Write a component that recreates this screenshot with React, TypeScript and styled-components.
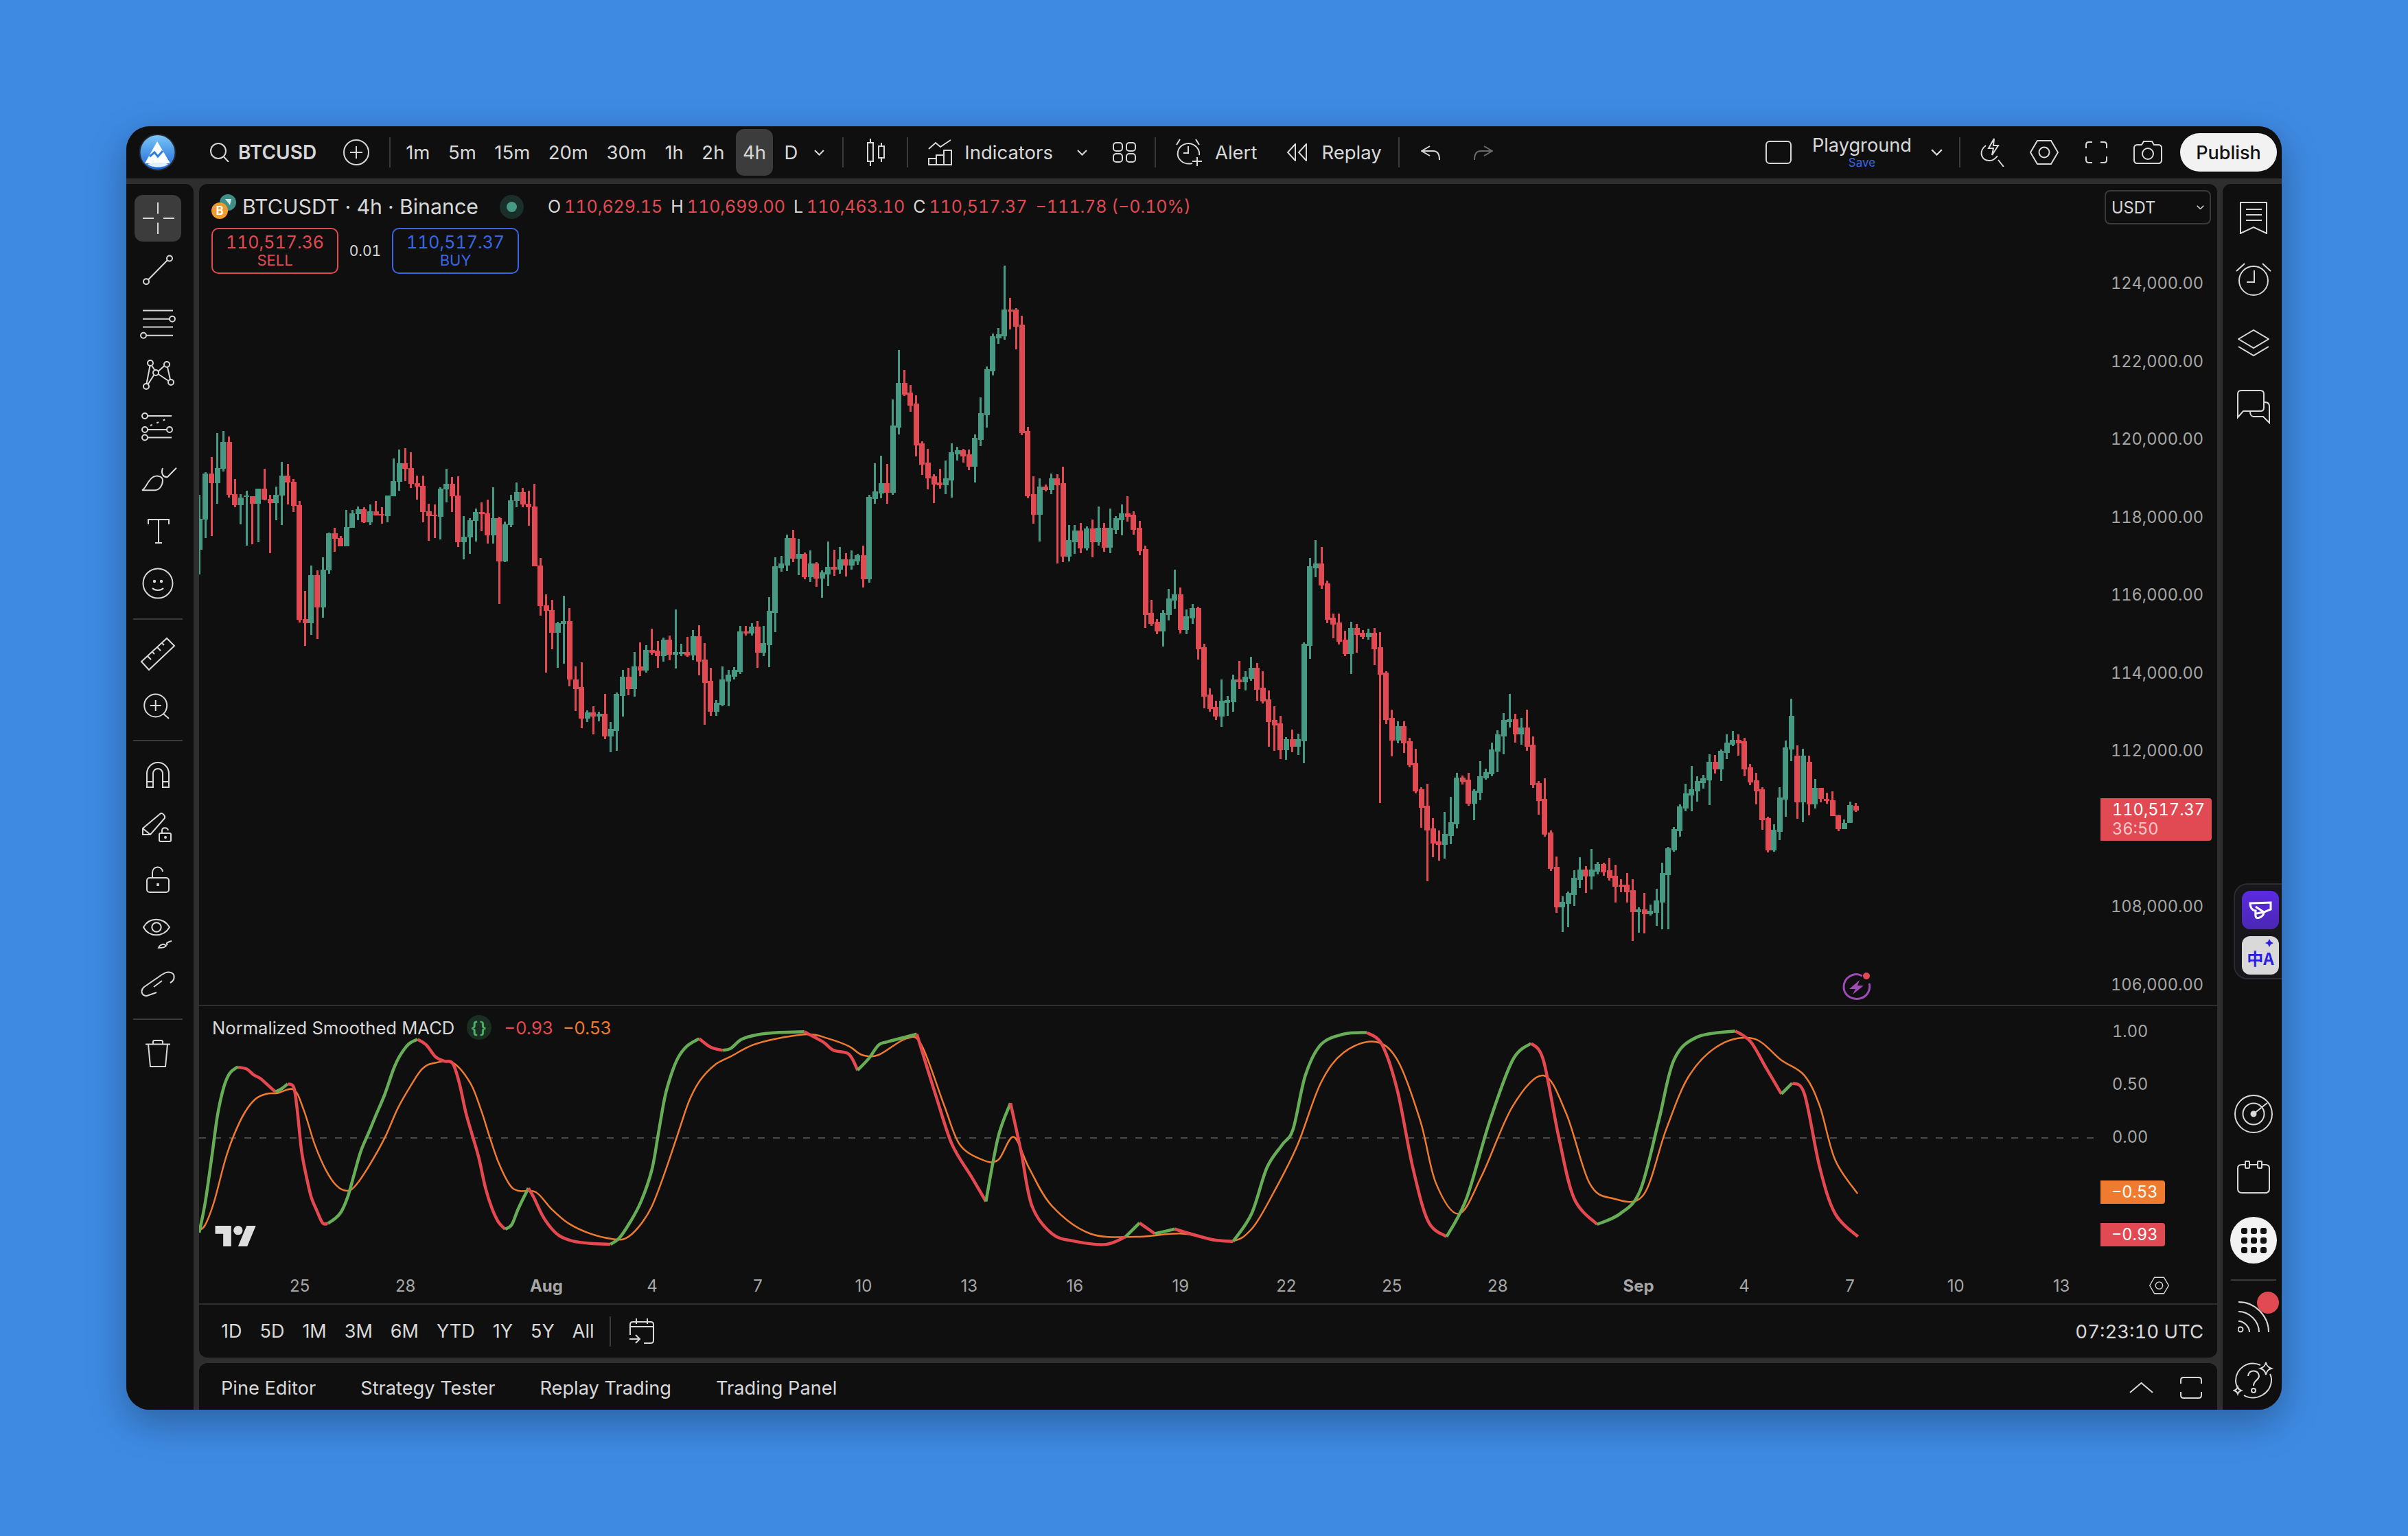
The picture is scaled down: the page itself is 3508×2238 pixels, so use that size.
import React from 'react'
import styled, { createGlobalStyle } from 'styled-components'

const GREEN = '#469a84'
const RED = '#e24a53'
const ORANGE = '#ee7b30'
const TEXT = '#d8d8d8'
const MUTED = '#a6a6a6'
const PANEL = '#0f0f0f'
const LINE = '#2e2e2e'

const GlobalStyle = createGlobalStyle`
  html, body {
    margin: 0;
    padding: 0;
    background: #3e8ae3;
  }
  body {
    font-family: Inter, "Noto Sans", sans-serif;
  }
`

// candle data, traced from the picture: [top, bottom, wickTop, wickBottom, up]
type Traced = [number, number, number, number, number]
const head: Traced[] = [
  [768, 903, 663, 1010, 1], [570, 770, 564, 852, 1], [570, 612, 498, 843, 0], [546, 612, 393, 702, 1],
  [432, 549, 384, 561, 1], [432, 663, 408, 675, 0], [660, 708, 594, 717, 0], [675, 708, 660, 792, 1],
  [666, 672, 645, 885, 1], [669, 702, 669, 879, 0], [636, 702, 636, 870, 1], [636, 684, 549, 687, 0],
  [681, 699, 663, 918, 0], [663, 699, 627, 774, 1], [579, 666, 519, 795, 1], [579, 609, 528, 705, 0],
  [606, 711, 594, 738, 0], [708, 1209, 690, 1221, 0], [1206, 1224, 1083, 1323, 0], [1014, 1224, 972, 1275, 1],
  [1014, 1155, 993, 1293, 0], [990, 1155, 936, 1200, 1], [831, 993, 828, 1008, 1], [831, 855, 807, 912, 0],
  [852, 888, 843, 888, 0], [804, 888, 729, 888, 1], [744, 807, 729, 807, 1], [726, 747, 714, 774, 1],
  [726, 783, 717, 786, 0], [735, 783, 705, 795, 1], [735, 753, 690, 753, 0], [747, 753, 717, 789, 0],
  [666, 756, 666, 783, 1], [603, 669, 504, 669, 1], [525, 606, 465, 645, 1], [525, 549, 459, 603, 0],
  [546, 615, 477, 633, 0], [612, 627, 579, 684, 0], [624, 738, 579, 783, 0], [735, 756, 702, 864, 0],
  [750, 756, 705, 852, 0], [636, 759, 630, 858, 1], [615, 639, 549, 696, 1], [615, 669, 585, 738, 0],
  [666, 870, 582, 891, 0], [846, 870, 756, 945, 1], [774, 849, 765, 921, 1], [738, 777, 723, 867, 1],
  [738, 747, 696, 822, 0], [744, 840, 684, 876, 0], [765, 840, 630, 876, 1], [765, 954, 759, 1140, 0],
  [792, 954, 780, 957, 1], [687, 795, 663, 804, 1], [651, 690, 609, 717, 1], [651, 705, 633, 717, 0],
  [702, 717, 645, 798, 0], [714, 975, 615, 975, 0], [972, 1149, 939, 1191, 0], [1146, 1170, 1098, 1440, 0],
  [1167, 1266, 1122, 1338, 0], [1224, 1266, 1218, 1420, 1], [1215, 1227, 1104, 1400, 1], [1215, 1470, 1158, 1500, 0],
]
const tail: Traced[] = [
  [-40, 102, -70, 150, 0], [-40, 102, -60, 160, 1], [-20, 108, -40, 140, 0], [58, 108, 30, 120, 1],
  [58, 90, 58, 102, 0], [90, 96, 72, 105, 0], [94, 142, 68, 142, 0], [140, 182, 138, 188, 0],
  [164, 182, 152, 182, 1], [110, 164, 100, 164, 1], [111, 125, 103, 130, 0],
]

// close path for the middle of the series, in reference coordinates / 2.2372
const closePath: [number, number][] = [
  [371, 440], [375, 455], [380, 462], [385, 460], [390, 470], [397, 482], [402, 450], [410, 440], [415, 432],
  [422, 428], [430, 425], [437, 418], [445, 425], [452, 420], [458, 440], [461, 465], [468, 452], [475, 440],
  [480, 425], [484, 405], [490, 415], [497, 425], [503, 375], [512, 352], [525, 370], [545, 372], [556, 362],
  [563, 375], [566, 330], [578, 315], [586, 240], [594, 265], [600, 305], [612, 318], [622, 290], [632, 298],
  [638, 270], [647, 220], [654, 200], [662, 205], [667, 310], [672, 345], [678, 315], [688, 310], [692, 365],
  [700, 350], [720, 350], [733, 330], [740, 345], [746, 400], [755, 412], [762, 382], [770, 410], [778, 400],
  [783, 450], [790, 470], [805, 440], [815, 430], [825, 465], [835, 485], [848, 480], [850, 375], [858, 365],
  [865, 400], [875, 420], [885, 405], [897, 430], [903, 475], [912, 480], [920, 510], [930, 540], [943, 550],
  [948, 510], [960, 520], [970, 490], [982, 460], [995, 490], [1003, 530], [1012, 585], [1025, 575],
  [1045, 565], [1060, 580], [1070, 600], [1085, 565], [1092, 530], [1105, 515], [1125, 485], [1135, 490],
  [1145, 525], [1152, 552], [1160, 520], [1165, 468],
]
const wickHighs: [number, number][] = [
  [654, 173], [586, 228], [855, 352], [982, 452], [1165, 455], [1127, 476], [440, 397], [512, 348], [733, 323],
]
const wickLows: [number, number][] = [
  [397, 490], [929, 574], [1017, 607], [1070, 608], [1085, 605], [898, 523], [1150, 555], [850, 497], [458, 472], [690, 367],
]

const SCALE = 2.2372
const STEP = 8.557
const barX = (i: number) => 290.9 + STEP * i

const pathY = (x: number) => {
  for (let k = 1; k < closePath.length; k++) {
    const [x0, y0] = closePath[k - 1]
    const [x1, y1] = closePath[k]
    if (x <= x1) return y0 + ((y1 - y0) * (x - x0)) / (x1 - x0)
  }
  return closePath[closePath.length - 1][1]
}

const buildCandles = () => {
  let seed = 41
  const rand = () => {
    seed = (seed * 16807) % 2147483647
    return seed / 2147483647
  }
  const bars: { x: number; top: number; bot: number; wt: number; wb: number; up: boolean }[] = []
  head.forEach((c, i) =>
    bars.push({ x: barX(i), top: 500 + c[0] / 3, bot: 500 + c[1] / 3, wt: 500 + c[2] / 3, wb: 500 + c[3] / 3, up: !!c[4] }),
  )
  let prev = bars[bars.length - 1].bot
  for (let i = 64; i < 272; i++) {
    const x = barX(i)
    const close = pathY(x / SCALE) * SCALE + (rand() - 0.5) * 30
    const top = Math.min(prev, close)
    const bot = Math.max(prev, close) + 3
    const bar = {
      x,
      top,
      bot,
      wt: top - rand() * rand() * 44 - 2,
      wb: bot + rand() * rand() * 44 + 2,
      up: close < prev,
    }
    wickHighs.forEach(([hx, hy]) => {
      if (Math.abs(hx * SCALE - x) < 4.3) bar.wt = hy * SCALE
    })
    wickLows.forEach(([lx, ly]) => {
      if (Math.abs(lx * SCALE - x) < 4.3) bar.wb = ly * SCALE
    })
    bars.push(bar)
    prev = close
  }
  tail.forEach((c, k) =>
    bars.push({
      x: barX(272 + k),
      top: 1120 + c[0] / 2.063,
      bot: 1120 + c[1] / 2.063,
      wt: 1120 + c[2] / 2.063,
      wb: 1120 + c[3] / 2.063,
      up: !!c[4],
    }),
  )
  return bars
}
const candles = buildCandles()

// MACD lines. First part read from a zoom, rest in reference coordinates.
type Pt = [number, number]
const zm = (pts: Pt[]): Pt[] => pts.map(([x, y]) => [280 + x / 1.568, 1450 + y / 3])
const dp = (pts: Pt[]): Pt[] => pts.map(([x, y]) => [x * SCALE, y * SCALE])

const fastLine: { color: string; pts: Pt[] }[] = [
  { color: 'g', pts: zm([[16, 1035], [30, 900], [45, 700], [58, 520], [72, 400], [85, 340], [100, 315], [105, 312]]) },
  { color: 'r', pts: zm([[105, 312], [125, 320], [140, 345], [155, 360], [170, 385], [190, 420]]) },
  { color: 'g', pts: zm([[190, 420], [205, 405], [218, 385]]) },
  { color: 'r', pts: zm([[218, 385], [232, 400], [240, 500], [250, 680], [262, 800], [272, 880], [285, 940], [298, 993], [310, 995]]) },
  { color: 'g', pts: zm([[310, 995], [325, 975], [340, 945], [355, 880], [370, 780], [385, 680], [405, 590], [420, 520], [440, 430], [460, 320], [475, 260], [495, 210], [515, 190]]) },
  { color: 'r', pts: zm([[515, 190], [535, 215], [555, 265], [575, 285], [595, 295], [610, 380], [625, 510], [640, 610], [655, 710], [670, 840], [685, 930], [700, 990], [715, 1020]]) },
  { color: 'g', pts: zm([[715, 1020], [730, 1000], [745, 930], [768, 840]]) },
  { color: 'r', pts: zm([[768, 840], [780, 880], [800, 960], [820, 1015], [840, 1050], [870, 1072], [910, 1082], [955, 1086]]) },
  { color: 'g', pts: zm([[955, 1086], [975, 1060], [1000, 990], [1025, 900], [1050, 760], [1065, 600], [1080, 440], [1095, 340], [1110, 270], [1130, 220], [1158, 187]]) },
  { color: 'r', pts: zm([[1158, 187], [1185, 225], [1212, 238]]) },
  { color: 'g', pts: zm([[1212, 238], [1230, 230], [1255, 190], [1290, 170], [1340, 160], [1398, 157]]) },
  { color: 'r', pts: zm([[1398, 157], [1440, 200], [1465, 238], [1500, 255], [1520, 325]]) },
  { color: 'g', pts: [...zm([[1520, 325], [1545, 275], [1568, 215]]), ...dp([[578, 678], [597, 673]])] },
  { color: 'r', pts: dp([[597, 673], [610, 715], [620, 745], [632, 765], [642, 782]]) },
  { color: 'g', pts: dp([[642, 782], [650, 740], [658, 718]]) },
  { color: 'r', pts: dp([[658, 718], [665, 750], [672, 785], [685, 803], [700, 808], [720, 810], [733, 805]]) },
  { color: 'g', pts: dp([[733, 805], [742, 796]]) },
  { color: 'r', pts: dp([[742, 796], [752, 803]]) },
  { color: 'g', pts: dp([[752, 803], [765, 800]]) },
  { color: 'r', pts: dp([[765, 800], [775, 803], [790, 807], [803, 808]]) },
  { color: 'g', pts: dp([[803, 808], [815, 790], [825, 760], [835, 745], [842, 735], [850, 700], [860, 680], [875, 673], [890, 672]]) },
  { color: 'r', pts: dp([[890, 672], [900, 680], [910, 710], [920, 760], [930, 795], [942, 805]]) },
  { color: 'g', pts: dp([[942, 805], [955, 780], [970, 730], [985, 690], [997, 679]]) },
  { color: 'r', pts: dp([[997, 679], [1005, 690], [1015, 740], [1025, 780], [1040, 797]]) },
  { color: 'g', pts: dp([[1040, 797], [1055, 790], [1068, 775], [1080, 730], [1090, 690], [1105, 675], [1130, 671]]) },
  { color: 'r', pts: dp([[1130, 671], [1140, 678], [1150, 695], [1160, 712]]) },
  { color: 'g', pts: dp([[1160, 712], [1167, 705]]) },
  { color: 'r', pts: dp([[1167, 705], [1175, 712], [1185, 760], [1195, 790], [1209.8, 805]]) },
]

const slowLine: Pt[] = [
  ...zm([[16, 1025], [30, 1000], [50, 900], [75, 720], [95, 610], [120, 510], [145, 450], [170, 428], [195, 425], [232, 410], [255, 500], [280, 650], [305, 760], [330, 830], [355, 852], [375, 825], [405, 740], [440, 620], [470, 490], [500, 390], [525, 320], [550, 295], [595, 292], [635, 380], [660, 500], [680, 620], [700, 730], [725, 825], [745, 852], [785, 858], [820, 930], [860, 995], [910, 1040], [960, 1063], [990, 1060], [1020, 1010], [1050, 920], [1080, 770], [1110, 600], [1135, 460], [1160, 370], [1195, 300], [1230, 265], [1280, 215], [1340, 185], [1410, 168], [1450, 185], [1500, 220], [1530, 258], [1568, 258]]),
  ...dp([[590, 676], [600, 680], [615, 720], [625, 745], [640, 755], [650, 755], [660, 740], [670, 760], [685, 785], [710, 803], [740, 805], [770, 803], [800, 808], [815, 800], [830, 775], [845, 745], [860, 705], [875, 685], [895, 678], [910, 690], [925, 730], [935, 770], [950, 790], [965, 765], [985, 720], [1005, 700], [1020, 725], [1035, 770], [1050, 780], [1070, 778], [1085, 735], [1100, 700], [1120, 680], [1142, 676], [1160, 690], [1175, 700], [1185, 720], [1195, 755], [1209.6, 777]]),
]

// catmull-rom through the traced points so the lines don't look polygonal
const toCurve = (pts: Pt[]) => {
  let d = `M${pts[0][0]} ${pts[0][1]}`
  for (let i = 0; i < pts.length - 1; i++) {
    const p0 = pts[i - 1] ?? pts[i]
    const p1 = pts[i]
    const p2 = pts[i + 1]
    const p3 = pts[i + 2] ?? p2
    d += `C${p1[0] + (p2[0] - p0[0]) / 6} ${p1[1] + (p2[1] - p0[1]) / 6} ${p2[0] - (p3[0] - p1[0]) / 6} ${p2[1] - (p3[1] - p1[1]) / 6} ${p2[0]} ${p2[1]}`
  }
  return d
}

const Page = styled.div`
  box-sizing: border-box;
  width: 3508px;
  height: 2238px;
  padding: 184px;
  background: #3e8ae3;
`

const Window = styled.div`
  display: flex;
  flex-direction: column;
  gap: 8px;
  height: 100%;
  border-radius: 34px;
  overflow: hidden;
  background: ${LINE};
  color: ${TEXT};
  box-shadow: 0 18px 55px rgba(0, 0, 0, 0.3);
`

const TopBar = styled.header`
  display: flex;
  flex: none;
  align-items: center;
  height: 76px;
  padding: 0 7px 0 18px;
  background: ${PANEL};
  font-size: 27.5px;
  white-space: nowrap;
`

const Spacer = styled.div`
  margin-left: auto;
`

const Glyph = styled.svg<{ $ml?: number; $mr?: number; $dim?: boolean }>`
  display: block;
  flex: none;
  fill: none;
  stroke: ${p => (p.$dim ? '#6a6a6a' : 'currentColor')};
  stroke-width: 2;
  margin-left: ${p => p.$ml ?? 0}px;
  margin-right: ${p => p.$mr ?? 0}px;
`

const Label = styled.span<{ $ml?: number }>`
  margin-left: ${p => p.$ml ?? 0}px;
`

const Symbol = styled.b`
  margin-left: 13px;
  font-size: 28px;
  font-weight: 600;
`

const Rule = styled.i<{ $ml: number }>`
  display: block;
  flex: none;
  width: 2px;
  height: 44px;
  margin-left: ${p => p.$ml}px;
  background: #3a3a3a;
`

const Intervals = styled.div`
  display: flex;
  align-items: center;
  gap: 6.5px;
  margin-left: 12px;
`

const Interval = styled.span<{ $active?: boolean }>`
  display: flex;
  align-items: center;
  height: 68px;
  padding: 0 10px;
  border-radius: 12px;
  background: ${p => (p.$active ? '#3c3c3c' : 'transparent')};
`

const SaveStack = styled.div`
  display: flex;
  flex-direction: column;
  align-items: center;
  margin-left: 30px;
  font-size: 27.2px;
  line-height: 1;
`

const SaveHint = styled.span`
  margin-top: 3px;
  font-size: 17px;
  color: #3a66e6;
`

const PublishButton = styled.button`
  width: 141px;
  height: 56px;
  margin-left: 26px;
  padding: 0;
  border: 0;
  border-radius: 28px;
  background: #f2f2f2;
  color: #111;
  font: 500 27px Inter, sans-serif;
`

const Body = styled.div`
  display: flex;
  flex: 1;
  gap: 8px;
  min-height: 0;
`

const LeftRail = styled.nav`
  display: flex;
  flex: none;
  flex-direction: column;
  gap: 8px;
  box-sizing: border-box;
  width: 98px;
  padding: 16px 0 0 12px;
  border-radius: 0 12px 0 0;
  background: ${PANEL};
`

const RailButton = styled.div<{ $active?: boolean }>`
  display: flex;
  align-items: center;
  justify-content: center;
  width: 68px;
  height: 68px;
  flex: none;
  border-radius: 12px;
  background: ${p => (p.$active ? '#3c3c3c' : 'transparent')};
`

const RailRule = styled.hr`
  flex: none;
  width: 72px;
  height: 2px;
  margin: 8.5px 0 7px -2px;
  border: 0;
  background: #3a3a3a;
`

const Center = styled.main`
  display: flex;
  flex: 1;
  flex-direction: column;
  gap: 8px;
  min-width: 0;
`

const ChartPanel = styled.section`
  display: flex;
  flex: 1;
  flex-direction: column;
  border-radius: 12px;
  overflow: hidden;
  background: ${PANEL};
`

const MainPane = styled.div`
  display: flex;
  flex: none;
  height: 1196px;
`

const MacdPane = styled.div`
  display: flex;
  flex: none;
  height: 384px;
  border-top: 2px solid ${LINE};
`

const Plot = styled.div`
  position: relative;
  flex: none;
  width: 2770px;
  height: 100%;
`

const PlotSvg = styled.svg`
  display: block;
  width: 100%;
  height: 100%;
`

const Legend = styled.div`
  position: absolute;
  top: 13px;
  left: 18px;
  display: flex;
  flex-direction: column;
  gap: 11px;
`

const LegendRow = styled.div`
  display: flex;
  align-items: center;
  height: 40px;
  font-size: 25px;
  font-variant-numeric: tabular-nums;
  white-space: nowrap;
`

const Title = styled.span`
  margin-left: 8px;
  font-size: 30.3px;
`

const StatusDot = styled.span`
  display: flex;
  align-items: center;
  justify-content: center;
  width: 35px;
  height: 35px;
  margin: 0 35px 0 31px;
  border-radius: 50%;
  background: #1a2e2a;

  &::after {
    content: '';
    width: 15px;
    height: 15px;
    border-radius: 50%;
    background: ${GREEN};
  }
`

const Ohlc = styled.span`
  margin-right: 12px;
  color: ${RED};

  & > b {
    margin-right: 5px;
    font-weight: 400;
    color: ${TEXT};
  }
`

const TradeRow = styled.div`
  display: flex;
  align-items: center;
  font-variant-numeric: tabular-nums;
`

const TradeButton = styled.div<{ $color: string }>`
  display: flex;
  flex-direction: column;
  align-items: center;
  justify-content: center;
  box-sizing: border-box;
  width: 185px;
  height: 67px;
  border: 2px solid ${p => p.$color};
  border-radius: 10px;
  color: ${p => p.$color};
  font-size: 25px;
  line-height: 27px;

  & > small {
    font-size: 22px;
    line-height: 24px;
  }
`

const Spread = styled.span`
  width: 78px;
  text-align: center;
  font-size: 21px;
`

const BoltBadge = styled.svg`
  position: absolute;
  left: 2394px;
  top: 1148px;
`

const PriceAxis = styled.div`
  position: relative;
  flex: 1;
  padding-top: 88px;
  color: ${MUTED};
  font-size: 23.6px;
  font-variant-numeric: tabular-nums;
`

const PriceTick = styled.div<{ $step: number }>`
  display: flex;
  align-items: center;
  justify-content: flex-end;
  height: ${p => p.$step}px;
  padding-right: 20px;
`

const CurrencySelect = styled.div`
  position: absolute;
  top: 9px;
  left: 6px;
  display: flex;
  align-items: center;
  justify-content: space-between;
  box-sizing: border-box;
  width: 155px;
  height: 50px;
  padding: 0 8px;
  border: 2px solid #3a3a3a;
  border-radius: 8px;
  color: ${TEXT};
`

const PriceFlag = styled.div<{ $top: number; $bg: string; $tall?: boolean }>`
  position: absolute;
  top: ${p => p.$top}px;
  left: 0;
  box-sizing: border-box;
  width: ${p => (p.$tall ? 162 : 94)}px;
  height: ${p => (p.$tall ? 62 : 34)}px;
  padding-left: ${p => (p.$tall ? 17 : 16)}px;
  border-radius: 0 4px 4px 0;
  background: ${p => p.$bg};
  color: #fff;
  line-height: ${p => (p.$tall ? 28 : 34)}px;
  padding-top: ${p => (p.$tall ? 3 : 0)}px;

  & > span {
    display: block;
    color: rgba(255, 255, 255, 0.7);
  }
`

const MacdAxis = styled(PriceAxis)`
  padding-top: 0;
  margin-top: -2px;
`

const MacdTick = styled(PriceTick)`
  padding-right: 0;
  justify-content: flex-start;
  padding-left: 17px;
`

const MacdLegend = styled.div`
  position: absolute;
  top: 13px;
  left: 19px;
  display: flex;
  align-items: center;
  font-size: 25.6px;
  white-space: nowrap;
`

const Braces = styled.span`
  display: flex;
  align-items: center;
  justify-content: center;
  width: 36px;
  height: 36px;
  margin: 0 18px;
  border-radius: 50%;
  background: #1a2e22;
  color: #4fae68;
  font-size: 24px;
  font-weight: 600;
  letter-spacing: 2px;
`

const MacdValue = styled.span<{ $color: string }>`
  margin-right: 14px;
  color: ${p => p.$color};
`

const TvLogo = styled.svg`
  position: absolute;
  left: 23px;
  top: 320px;
  fill: #dedede;
`

const TimeAxis = styled.div`
  display: flex;
  flex: none;
  align-items: center;
  box-sizing: border-box;
  height: 51px;
  padding-bottom: 3px;
  border-bottom: 2px solid ${LINE};
`

const TimeGrid = styled.div`
  display: grid;
  grid-template-columns: repeat(51, 51.34px);
  box-sizing: border-box;
  width: 2841px;
  padding-left: 121px;
  color: ${MUTED};
  font-size: 24px;
`

const TimeTick = styled.span<{ $day: number; $strong?: boolean }>`
  grid-column: ${p => p.$day + 1};
  grid-row: 1;
  justify-self: center;
  font-weight: ${p => (p.$strong ? 700 : 400)};
`

const RangeBar = styled.div`
  display: flex;
  flex: 1;
  align-items: center;
  gap: 26px;
  padding: 0 20px 0 32px;
  font-size: 27px;
`

const RangeClock = styled.span`
  margin-left: auto;
  font-size: 27.5px;
  font-variant-numeric: tabular-nums;
`

const BottomPanel = styled.footer`
  display: flex;
  flex: none;
  align-items: center;
  gap: 65px;
  box-sizing: border-box;
  height: 68px;
  padding: 4px 22px 0 32px;
  border-radius: 12px 12px 0 0;
  background: ${PANEL};
  font-size: 27.2px;
`

const RightRail = styled.aside`
  display: flex;
  flex: none;
  flex-direction: column;
  align-items: center;
  box-sizing: border-box;
  width: 86px;
  padding: 3px 0 0 4px;
  border-radius: 12px 0 0 0;
  background: ${PANEL};
`

const RightSlot = styled.div`
  display: flex;
  flex: none;
  align-items: center;
  justify-content: center;
  height: 92px;
`

const Widget = styled.div`
  display: flex;
  flex: none;
  flex-direction: column;
  gap: 10px;
  align-self: flex-end;
  box-sizing: border-box;
  width: 70px;
  height: 140px;
  margin: 648px 0 150px 0;
  padding: 9px 4px 9px 10px;
  border: 2px solid #2a2a30;
  border-right: 0;
  border-radius: 20px 0 0 20px;
  background: #17171b;
`

const WidgetButton = styled.div<{ $light?: boolean }>`
  position: relative;
  display: flex;
  flex: none;
  justify-content: center;
  height: 56px;
  padding-bottom: ${p => (p.$light ? 12 : 0)}px;
  box-sizing: border-box;
  align-items: ${p => (p.$light ? 'flex-end' : 'center')};
  border-radius: 12px;
  background: ${p => (p.$light ? '#d9d9d9' : 'linear-gradient(#5b2be0, #4a27b5)')};
  color: #2c1fe0;
  font: 700 24px "Noto Sans CJK SC", "Liberation Sans", sans-serif;
  line-height: 1;
`

const Sparkle = styled.svg`
  position: absolute;
  top: 4px;
  right: 8px;
  fill: #2c1fe0;
`

const DotsButton = styled.div`
  display: grid;
  grid-template-columns: repeat(3, 9px);
  gap: 5px;
  justify-content: center;
  align-content: center;
  width: 68px;
  height: 68px;
  border-radius: 50%;
  background: #f2f2f2;

  & > i {
    width: 9px;
    height: 9px;
    border-radius: 3px;
    background: #111;
  }
`

const RightRule = styled.hr`
  flex: none;
  width: 66px;
  height: 2px;
  margin: 11px 0 7px;
  border: 0;
  background: #3a3a3a;
`

const FeedIcon = styled.div`
  position: relative;
  display: flex;
`

const RedDot = styled.i`
  position: absolute;
  top: -14px;
  right: -14px;
  width: 32px;
  height: 32px;
  border-radius: 50%;
  background: ${RED};
`

const Chevron: React.FC<{ ml?: number; size?: number }> = ({ ml, size = 15 }) => (
  <Glyph $ml={ml} width={size} height={size * 0.6} viewBox="0 0 15 9">
    <path d="M1 1l6.500 6.500L14 1" />
  </Glyph>
)

const Hexagon: React.FC<{ w: number; h: number; ml?: number; mr?: number }> = ({ w, h, ml, mr }) => (
  <Glyph $ml={ml} $mr={mr} width={w} height={h} viewBox="0 0 42 36">
    <path d="M1 18L11 1h20l10 17-10 17H11z" />
    <circle cx="21" cy="18" r="7.500" />
  </Glyph>
)

const RailIcon: React.FC<{ children: React.ReactNode }> = ({ children }) => (
  <Glyph width={56} height={56} viewBox="0 0 56 56">
    {children}
  </Glyph>
)

const leftTools: React.ReactNode[] = [
  <path d="M28 5V21.500M28 34.500V51M6 28H22M36 28H52" />,
  <>
    <circle cx="45" cy="10.500" r="4" />
    <circle cx="11" cy="44.300" r="4" />
    <path d="M42 13L14 41.500" />
  </>,
  <>
    <path d="M6 10.500H50M6 22.700H45M6 34.500H50M11 46.800H50" />
    <circle cx="49" cy="22.700" r="4" />
    <circle cx="7" cy="46.800" r="4" />
  </>,
  <>
    <circle cx="17" cy="11" r="4" />
    <circle cx="41" cy="13" r="4" />
    <circle cx="25" cy="25" r="4" />
    <circle cx="11" cy="45" r="4" />
    <circle cx="47" cy="39" r="4" />
    <path d="M16.500 15L11.500 41M19 14.500L23.500 21.500M22.500 28L13.500 42M28.500 23L37.500 15M42 17L46 35M28.500 27L43.500 37" />
  </>,
  <>
    <circle cx="9" cy="12" r="4" />
    <path d="M13 12H48" />
    <path d="M17 26L44 15" strokeDasharray="3 7" />
    <circle cx="9" cy="32" r="4" />
    <circle cx="45" cy="32" r="4" />
    <path d="M13 32H41" />
    <circle cx="9" cy="43.500" r="4" />
    <path d="M13 43.500H48" />
  </>,
  <>
    <path d="M5 44.300C11 41 13 30 21 25C27 22 35 24 35 30C35 37 30 44.300 24 44.300Z" />
    <path d="M55 11.700L42 25C36 26 32 20 35 12" />
  </>,
  <path d="M14 18V11H44V18M29 11V45M24 45H34" />,
  <>
    <circle cx="28" cy="28" r="21.500" />
    <path d="M20 35C24 39 32 39 36 35" />
    <circle cx="23" cy="25" r="1.200" />
    <circle cx="33" cy="25" r="1.200" />
  </>,
]
const measureTools: React.ReactNode[] = [
  <>
    <path d="M4 40L41 6L52 17L15 52Z" />
    <path d="M13 32L18 37M20 26L23 29M27 19L32 24M34 13L37 16" />
  </>,
  <>
    <circle cx="24.700" cy="28" r="16.500" />
    <path d="M16.700 28H32.700M24.700 20V36M36 40L44 47" />
  </>,
]
const magnetTools: React.ReactNode[] = [
  <path d="M12 46V26a16 16 0 0 1 32 0V46H35V26a7 7 0 0 0-14 0V46ZM12 38H21M35 38H44" />,
  <>
    <path d="M6 39V30L31 9C34 6 39 11 38 15L17 39Z" />
    <path d="M6 30L17 39" />
    <rect x="30" y="37" width="17" height="12" rx="2" />
    <path d="M34 37V33C34 28 42 28 43 33" />
    <circle cx="39" cy="43" r="1" />
  </>,
  <>
    <rect x="12" y="26" width="32" height="21" rx="4" />
    <path d="M20 26V19C20 8 34 8 35 17" />
    <path d="M28 34V38" strokeWidth="3.500" />
  </>,
  <>
    <path d="M7 22C15 7 36 7 45 22C36 37 15 37 7 22Z" />
    <circle cx="26" cy="22" r="6.700" />
    <path d="M29 52C31 47 37 45 40 49C39 52 33 52 29 52ZM42 48C39 45 42 44 48 42" />
  </>,
  <path d="M22 33L34 24M26 41L12 46C4 46 2 38 8 33L34 15C44 8 54 12 51 22C50 24 48 26 46 27" />,
]

const Logo = () => (
  <Glyph width={55} height={54} viewBox="0 0 55 54" style={{ stroke: 'none' }}>
    <defs>
      <linearGradient id="logoFill" x1="0" y1="0" x2="0" y2="1">
        <stop offset="0" stopColor="#7cc6f8" />
        <stop offset="1" stopColor="#1c68d6" />
      </linearGradient>
    </defs>
    <circle cx="27.500" cy="27" r="26" fill="url(#logoFill)" stroke="#23272c" strokeWidth="2" />
    <path d="M27 11L46 43H9Z" fill="#fff" />
    <path d="M16 33L23 27L28 33L35 25" fill="none" stroke="#2f7fe0" strokeWidth="3" />
    <path d="M13 44C22 41 34 41 43 44C38 50 18 50 13 44Z" fill="#dff0ff" />
  </Glyph>
)

const Coins = () => (
  <Glyph width={37} height={36} viewBox="0 0 37 36" style={{ stroke: 'none' }}>
    <circle cx="24" cy="12" r="12" fill="#3f8f86" />
    <path d="M20 7H29L27 16Z" fill="#cfeee8" />
    <circle cx="12" cy="24" r="12" fill="#ef9b2d" />
    <text x="12" y="30" textAnchor="middle" fontSize="17" fontWeight="700" fill="#fff" fontFamily="Inter, sans-serif">
      B
    </text>
  </Glyph>
)

// these ticks sit under the flags in the picture, so their rows stay empty
const priceTicks = ['124,000.00', '122,000.00', '120,000.00', '118,000.00', '116,000.00', '114,000.00', '112,000.00', '', '108,000.00', '106,000.00']
const macdTicks = ['1.00', '0.50', '0.00']
const timeTicks: { day: number; label: string; strong?: boolean }[] = [
  { day: 0, label: '25' },
  { day: 3, label: '28' },
  { day: 7, label: 'Aug', strong: true },
  { day: 10, label: '4' },
  { day: 13, label: '7' },
  { day: 16, label: '10' },
  { day: 19, label: '13' },
  { day: 22, label: '16' },
  { day: 25, label: '19' },
  { day: 28, label: '22' },
  { day: 31, label: '25' },
  { day: 34, label: '28' },
  { day: 38, label: 'Sep', strong: true },
  { day: 41, label: '4' },
  { day: 44, label: '7' },
  { day: 47, label: '10' },
  { day: 50, label: '13' },
]

const intervals = ['1m', '5m', '15m', '20m', '30m', '1h', '2h', '4h', 'D']
const ranges = ['1D', '5D', '1M', '3M', '6M', 'YTD', '1Y', '5Y', 'All']
const tabs = ['Pine Editor', 'Strategy Tester', 'Replay Trading', 'Trading Panel']

const App: React.FC = () => (
  <Page>
    <GlobalStyle />
    <Window>
      <TopBar>
        <Logo />
        <Glyph $ml={49} width={28} height={28} viewBox="0 0 28 28">
          <circle cx="12" cy="12" r="11" />
          <path d="M20 20.500L27 28" />
        </Glyph>
        <Symbol>BTCUSD</Symbol>
        <Glyph $ml={39} width={38} height={38} viewBox="0 0 38 38">
          <circle cx="19" cy="19" r="18" />
          <path d="M19 10V28M10 19H28" />
        </Glyph>
        <Rule $ml={29} />
        <Intervals>
          {intervals.map(v => (
            <Interval key={v} $active={v === '4h'}>
              {v}
            </Interval>
          ))}
        </Intervals>
        <Chevron ml={14} />
        <Rule $ml={26} />
        <Glyph $ml={33} width={28} height={40} viewBox="0 0 28 40">
          <path d="M6 0V40M22 6V34" />
          <rect x="2" y="6" width="8" height="27" fill="#0f0f0f" />
          <rect x="18" y="11" width="8" height="17" fill="#0f0f0f" />
        </Glyph>
        <Rule $ml={31} />
        <Glyph $ml={29} width={36} height={38} viewBox="0 0 36 38">
          <path d="M1 14L11 5L18 11L33 1" />
          <path d="M1 28H12V37H1ZM12 23H23V37H12ZM23 16H34V37H23Z" />
        </Glyph>
        <Label $ml={17}>Indicators</Label>
        <Chevron ml={35} />
        <Glyph $ml={37} width={34} height={30} viewBox="0 0 34 30">
          <rect x="1" y="1" width="13" height="12" rx="4" />
          <rect x="20" y="1" width="13" height="12" rx="4" />
          <rect x="1" y="17" width="13" height="12" rx="4" />
          <rect x="20" y="17" width="13" height="12" rx="4" />
        </Glyph>
        <Rule $ml={27} />
        <Glyph $ml={29} width={41} height={40} viewBox="0 0 41 40">
          <path d="M24 36C10 39 1 29 3 19C5 9 17 4 26 9C33 13 35 20 34 24" />
          <path d="M1 9L6 1M29 1L34 9M18 11V21H11M31 27V40M24 33H38" />
        </Glyph>
        <Label $ml={16}>Alert</Label>
        <Glyph $ml={43} width={31} height={26} viewBox="0 0 31 26">
          <path d="M13 1L2 13L13 25ZM29 1L18 13L29 25Z" />
        </Glyph>
        <Label $ml={20}>Replay</Label>
        <Rule $ml={24} />
        <Glyph $ml={31} width={28} height={21} viewBox="0 0 28 21">
          <path d="M13 1L1 8L13 15M1 8H18C24 8 27 13 27 21" />
        </Glyph>
        <Glyph $ml={49} $dim width={28} height={21} viewBox="0 0 28 21">
          <path d="M15 1L27 8L15 15M27 8H10C4 8 1 13 1 21" />
        </Glyph>
        <Spacer />
        <Glyph width={38} height={34} viewBox="0 0 38 34">
          <rect x="1" y="1" width="36" height="32" rx="5" />
        </Glyph>
        <SaveStack>
          <span>Playground</span>
          <SaveHint>Save</SaveHint>
        </SaveStack>
        <Chevron ml={28} size={17} />
        <Rule $ml={24} />
        <Glyph $ml={28} width={36} height={42} viewBox="0 0 36 42">
          <path d="M9 11C-2 19 2 34 15 33C19 33 23 30 26 26M27 32L35 42" />
          <path d="M21 1L13 15H20L18 25L27 11H20Z" />
        </Glyph>
        <Hexagon w={42} h={36} ml={37} />
        <Glyph $ml={39} width={32} height={32} viewBox="0 0 32 32">
          <path d="M10 1H5C2 1 1 2 1 5V10M22 1H27C30 1 31 2 31 5V10M10 31H5C2 31 1 30 1 27V22M22 31H27C30 31 31 30 31 27V22" />
        </Glyph>
        <Glyph $ml={38} width={42} height={34} viewBox="0 0 42 34">
          <path d="M5 6H12L15 1H27L30 6H37C39 6 41 8 41 10V29C41 31 39 33 37 33H5C3 33 1 31 1 29V10C1 8 3 6 5 6Z" />
          <circle cx="21" cy="19" r="8" />
        </Glyph>
        <PublishButton>Publish</PublishButton>
      </TopBar>

      <Body>
        <LeftRail>
          {leftTools.map((icon, i) => (
            <RailButton key={i} $active={i === 0}>
              <RailIcon>{icon}</RailIcon>
            </RailButton>
          ))}
          <RailRule />
          {measureTools.map((icon, i) => (
            <RailButton key={i}>
              <RailIcon>{icon}</RailIcon>
            </RailButton>
          ))}
          <RailRule />
          {magnetTools.map((icon, i) => (
            <RailButton key={i}>
              <RailIcon>{icon}</RailIcon>
            </RailButton>
          ))}
          <RailRule />
          <RailButton>
            <RailIcon>
              <path d="M10 14.600H46M21 14.600V11C21 9.500 22 9 23 9H33C34 9 35 9.500 35 11V14.600M14 14.600L17 47H39L42 14.600" />
            </RailIcon>
          </RailButton>
        </LeftRail>

        <Center>
          <ChartPanel>
            <MainPane>
              <Plot>
                <PlotSvg viewBox="290 268 2770 1196" shapeRendering="crispEdges">
                  {candles.map((c, i) => (
                    <g key={i} fill={c.up ? GREEN : RED}>
                      <rect x={c.x - 1.5} y={c.wt} width={3} height={Math.max(c.wb - c.wt, 1)} />
                      <rect x={c.x - 4} y={c.top} width={8} height={Math.max(c.bot - c.top, 2)} />
                    </g>
                  ))}
                </PlotSvg>
                <Legend>
                  <LegendRow>
                    <Coins />
                    <Title>BTCUSDT · 4h · Binance</Title>
                    <StatusDot />
                    <Ohlc><b>O</b>110,629.15</Ohlc>
                    <Ohlc><b>H</b>110,699.00</Ohlc>
                    <Ohlc><b>L</b>110,463.10</Ohlc>
                    <Ohlc><b>C</b>110,517.37</Ohlc>
                    <Ohlc>−111.78 (−0.10%)</Ohlc>
                  </LegendRow>
                  <TradeRow>
                    <TradeButton $color={RED}>
                      110,517.36
                      <small>SELL</small>
                    </TradeButton>
                    <Spread>0.01</Spread>
                    <TradeButton $color="#3a66e6">
                      110,517.37
                      <small>BUY</small>
                    </TradeButton>
                  </TradeRow>
                </Legend>
                <BoltBadge width={42} height={42} viewBox="0 0 42 42" fill="none">
                  <path d="M29 6C16 -1 2 9 2 22C2 41 30 46 38 29C40 25 40 20 39 17" stroke="#a04ab8" strokeWidth="3" />
                  <path d="M25 12L10 25H19L15 33L31 20H22Z" fill="#a04ab8" />
                  <circle cx="35" cy="6" r="5" fill={RED} />
                </BoltBadge>
              </Plot>
              <PriceAxis>
                <CurrencySelect>
                  USDT
                  <Chevron size={11} />
                </CurrencySelect>
                {priceTicks.map((t, i) => (
                  <PriceTick key={i} $step={113.5}>
                    {t}
                  </PriceTick>
                ))}
                <PriceFlag $top={895} $bg={RED} $tall>
                  110,517.37
                  <span>36:50</span>
                </PriceFlag>
              </PriceAxis>
            </MainPane>

            <MacdPane>
              <Plot>
                <PlotSvg viewBox="290 1466 2770 382">
                  <line x1="290" y1="1657" x2="3050" y2="1657" stroke="#4a4a4a" strokeWidth="2" strokeDasharray="10 12" />
                  <path d={toCurve(slowLine)} fill="none" stroke={ORANGE} strokeWidth="2.500" strokeLinejoin="round" />
                  {fastLine.map((seg, i) => (
                    <path
                      key={i}
                      d={toCurve(seg.pts)}
                      fill="none"
                      stroke={seg.color === 'g' ? '#66ad55' : '#e5484f'}
                      strokeWidth="4.500"
                      strokeLinejoin="round"
                    />
                  ))}
                </PlotSvg>
                <MacdLegend>
                  Normalized Smoothed MACD
                  <Braces>{'{}'}</Braces>
                  <MacdValue $color={RED}>−0.93</MacdValue>
                  <MacdValue $color={ORANGE}>−0.53</MacdValue>
                </MacdLegend>
                <TvLogo width={61} height={30} viewBox="0 4 36 18">
                  <path d="M14 22H7V11H0V4h14v18zM28 22h-8l7.500-18h8L28 22z" />
                  <circle cx="20" cy="8" r="4" />
                </TvLogo>
              </Plot>
              <MacdAxis>
                {macdTicks.map((t, i) => (
                  <MacdTick key={i} $step={77}>
                    {t}
                  </MacdTick>
                ))}
                <PriceFlag $top={256} $bg={ORANGE}>−0.53</PriceFlag>
                <PriceFlag $top={318} $bg={RED}>−0.93</PriceFlag>
              </MacdAxis>
            </MacdPane>

            <TimeAxis>
              <TimeGrid>
                {timeTicks.map(t => (
                  <TimeTick key={t.day} $day={t.day} $strong={t.strong}>
                    {t.label}
                  </TimeTick>
                ))}
              </TimeGrid>
              <Hexagon w={29} h={26} />
            </TimeAxis>

            <RangeBar>
              {ranges.map(r => (
                <span key={r}>{r}</span>
              ))}
              <Rule $ml={-4} />
              <Glyph width={38} height={38} viewBox="0 0 38 38">
                <path d="M2 24V9C2 6 4 5 6 5H32C35 5 36 7 36 9V32C36 35 35 36 32 36H22M2 12H36M11 0V8M27 0V8M1 30H16M10 24L16 30L10 36" />
              </Glyph>
              <RangeClock>07:23:10 UTC</RangeClock>
            </RangeBar>
          </ChartPanel>

          <BottomPanel>
            {tabs.map(t => (
              <span key={t}>{t}</span>
            ))}
            <Spacer />
            <Glyph width={35} height={16} viewBox="0 0 35 16">
              <path d="M1 15L17.500 1L34 15" />
            </Glyph>
            <Glyph $ml={-26} width={32} height={32} viewBox="0 0 32 32">
              <path d="M1 10V5C1 2 2 1 5 1H27C30 1 31 2 31 5V10M1 22V27C1 30 2 31 5 31H27C30 31 31 30 31 27V22" />
            </Glyph>
          </BottomPanel>
        </Center>

        <RightRail>
          <RightSlot>
            <Glyph width={40} height={47} viewBox="0 0 40 47">
              <path d="M1 1H39V46L20 37L1 46ZM9 11H32M9 19H32M9 27H32" />
            </Glyph>
          </RightSlot>
          <RightSlot>
            <Glyph width={52} height={48} viewBox="0 0 52 48" style={{ marginTop: -4 }}>
              <circle cx="26" cy="26" r="21" />
              <path d="M1 12L13 1M39 1L51 12M27 11V28H16" />
            </Glyph>
          </RightSlot>
          <RightSlot>
            <Glyph width={46} height={40} viewBox="0 0 46 40" style={{ marginTop: -2 }}>
              <path d="M1 14L23 1L45 14L23 27ZM1 25L23 38L45 25" />
            </Glyph>
          </RightSlot>
          <RightSlot>
            <Glyph width={48} height={50} viewBox="0 0 48 50">
              <path d="M1 40V6C1 3 3 1 6 1H34C37 1 39 3 39 6V26C39 29 37 31 34 31H9Z" />
              <path d="M40 18C44 18 47 20 47 24V48L38 39H24C21 39 19 36 19 32" />
            </Glyph>
          </RightSlot>

          <Widget>
            <WidgetButton>
              <Glyph width={34} height={26} viewBox="0 0 34 26" style={{ color: '#fff', strokeWidth: 3 }}>
                <path d="M2 3L32 2V12L22 16C22 22 14 26 11 24C9 22 10 16 10 14C6 14 2 10 2 3ZM10 8L22 16M11 18L22 16" />
              </Glyph>
            </WidgetButton>
            <WidgetButton $light>
              中A
              <Sparkle width={12} height={12} viewBox="0 0 12 12">
                <path d="M6 0L8 4L12 6L8 8L6 12L4 8L0 6L4 4Z" />
              </Sparkle>
            </WidgetButton>
          </Widget>

          <RightSlot>
            <Glyph width={56} height={56} viewBox="0 0 56 56">
              <circle cx="28" cy="28" r="27" />
              <circle cx="28" cy="28" r="15.500" />
              <circle cx="28" cy="28" r="3.500" fill="currentColor" />
              <path d="M28 28L48 12" />
            </Glyph>
          </RightSlot>
          <RightSlot>
            <Glyph width={48} height={48} viewBox="0 0 48 48">
              <path d="M12 6H7C3 6 1 8 1 11V41C1 45 3 47 7 47H41C45 47 47 45 47 41V11C47 8 45 6 41 6H36M18 6H30" />
              <rect x="12" y="1" width="6" height="10" rx="1" />
              <rect x="30" y="1" width="6" height="10" rx="1" />
            </Glyph>
          </RightSlot>
          <RightSlot>
            <DotsButton>
              {Array.from({ length: 9 }, (_, i) => (
                <i key={i} />
              ))}
            </DotsButton>
          </RightSlot>
          <RightRule />
          <RightSlot>
            <FeedIcon>
              <Glyph width={46} height={46} viewBox="0 0 46 46">
                <path d="M1 1C25 1 45 21 45 45M1 15C17 15 31 29 31 45M1 29C9 29 17 37 17 45" />
                <circle cx="4" cy="41" r="3.500" />
              </Glyph>
              <RedDot />
            </FeedIcon>
          </RightSlot>
          <RightSlot>
            <Glyph width={60} height={60} viewBox="0 0 60 60">
              <path d="M40 8C22 0 4 13 4 31C4 36 6 40 9 44M16 52C32 62 57 50 56 28C56 26 55 23 54 21" />
              <path d="M22 24C22 14 38 14 38 24C38 30 30 30 30 38" />
              <circle cx="30" cy="45" r="3" />
              <path d="M48 4C49 9 51 11 56 13C51 14 49 17 48 22C47 17 45 14 40 13C45 11 47 9 48 4Z" />
              <path d="M7 40C8 43 9 44 12 45C9 46 8 47 7 50C6 47 5 46 2 45C5 44 6 43 7 40Z" />
            </Glyph>
          </RightSlot>
        </RightRail>
      </Body>
    </Window>
  </Page>
)

export default App
